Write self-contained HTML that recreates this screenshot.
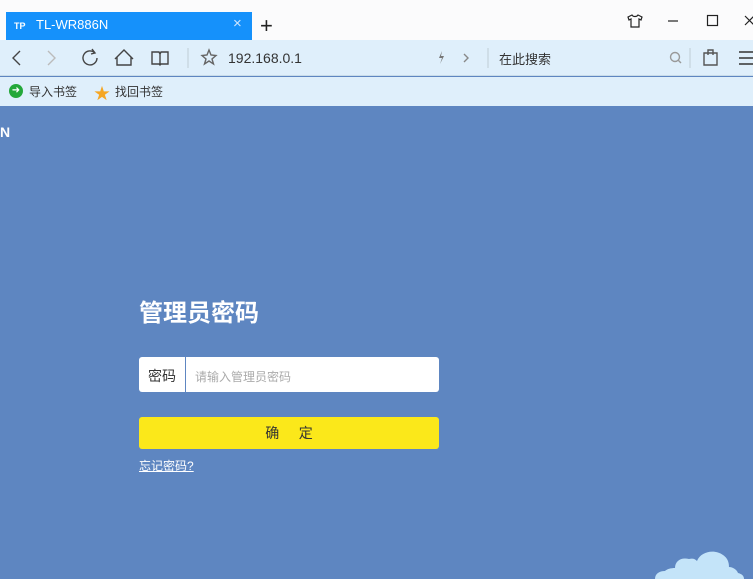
<!DOCTYPE html>
<html><head><meta charset="utf-8"><style>
*{margin:0;padding:0;box-sizing:border-box}
body{width:753px;height:579px;overflow:hidden;font-family:"Liberation Sans","Noto Sans CJK SC",sans-serif;background:#5e86c1;position:relative}
.a{position:absolute}
</style></head><body>
<div class="a" style="left:0;top:0;width:753px;height:40px;background:#fbfbfc"></div>
<div class="a" style="left:6px;top:12px;width:246px;height:28px;background:#1591fb"></div>
<div class="a" style="left:14px;top:19px;width:17px;height:14px;color:#fff;font-size:9px;font-weight:bold;line-height:14px">TP</div>
<div class="a" style="left:36px;top:17px;color:#fff;font-size:13px">TL-WR886N</div>
<div class="a" style="left:233px;top:15px;color:#cfe6ff;font-size:15px">×</div>
<div class="a" style="left:260px;top:13px;color:#222;font-size:22px;font-weight:300">+</div>
<svg class="a" style="left:620px;top:10px" width="133" height="22" fill="none" stroke="#222" stroke-width="1.2">
<path d="M12 5l-4 2 1 3 2-1v8h8V9l2 1 1-3-4-2c-1 2-5 2-6 0z"/>
<path d="M48 11h10"/><rect x="87.5" y="5.5" width="10" height="10"/><path d="M125 6l9 9M134 6l-9 9"/></svg>
<div class="a" style="left:0;top:40px;width:753px;height:36px;background:#dfeffb;border-bottom:1px solid #c9dce9"></div>
<svg class="a" style="left:0;top:44px" width="753" height="28" fill="none" stroke="#444" stroke-width="1.4">
<path d="M20 7l-7 7 7 7"/><path d="M48 7l7 7-7 7" stroke="#bbb"/>
<path d="M95 9a7 7 0 1 0 2 5M92 5l3 4-4 1"/>
<path d="M115 15l9-9 9 9M117 13v8h14v-8"/>
<path d="M152 8h7l1 2 1-2h7v12h-7l-1 1-1-1h-7z M160 10v11"/>
<path d="M188 4v20" stroke="#c8d6e0"/>
<path d="M209 6l2 5 5 .5-4 3.5 1.5 5-4.5-3-4.5 3 1.5-5-4-3.5 5-.5z" stroke="#666"/>
<path d="M442 7l-3 7h3l-2 6 4-8h-3z" fill="#777" stroke="none"/><path d="M464 10l4 4-4 4" stroke="#888"/>
<path d="M488 4v20" stroke="#c8d6e0"/>
<circle cx="675" cy="13" r="4.5" stroke="#999"/><path d="M678 16l3 3" stroke="#999"/>
<path d="M690 4v20" stroke="#c8d6e0"/>
<path d="M704 9h13v12h-13z M708 11V6h5v5" stroke="#555"/>
<path d="M739 8h14M739 14h14M739 20h14" stroke="#333"/></svg>
<div class="a" style="left:228px;top:50px;font-size:14px;color:#333">192.168.0.1</div>
<div class="a" style="left:499px;top:49px;font-size:13px;color:#333">在此搜索</div>
<div class="a" style="left:0;top:77px;width:753px;height:29px;background:#dfeffb"></div>
<div class="a" style="left:9px;top:84px;width:14px;height:14px;border-radius:50%;background:#24a83a;color:#fff;font-size:10px;line-height:14px;text-align:center">➜</div>
<div class="a" style="left:29px;top:83px;font-size:12px;color:#333">导入书签</div>
<div class="a" style="left:94px;top:80px;font-size:16px;color:#f5a623">★</div>
<div class="a" style="left:115px;top:83px;font-size:12px;color:#333">找回书签</div>
<div class="a" style="left:0;top:124px;color:#fff;font-weight:bold;font-size:14px">N</div>
<div class="a" style="left:139px;top:293px;color:#fff;font-weight:bold;font-size:24px">管理员密码</div>
<div class="a" style="left:139px;top:357px;width:300px;height:35px;background:#fff;border-radius:3px"></div>
<div class="a" style="left:185px;top:357px;width:1px;height:35px;background:#5e86c1"></div>
<div class="a" style="left:148px;top:366px;font-size:14px;color:#333">密码</div>
<div class="a" style="left:195px;top:368px;font-size:12px;color:#aaa">请输入管理员密码</div>
<div class="a" style="left:139px;top:417px;width:300px;height:32px;background:#fbe81a;border-radius:3px;text-align:center;line-height:32px;font-size:14px;color:#333">确&nbsp;&nbsp;&nbsp;&nbsp;&nbsp;定</div>
<div class="a" style="left:139px;top:457px;font-size:12px;color:#fff;text-decoration:underline">忘记密码?</div>
<svg class="a" style="left:650px;top:536px" width="103" height="43"><path d="M5 43c0-5 4-8 10-8 2-2 6-3 10-3 0-7 6-11 14-9 4-1 6 0 8 2 4-10 18-12 26-6 6 4 6 10 6 12 4 0 8 3 9 6 4 1 6 3 6 6z" fill="#c4e4f9"/></svg>
</body></html>
